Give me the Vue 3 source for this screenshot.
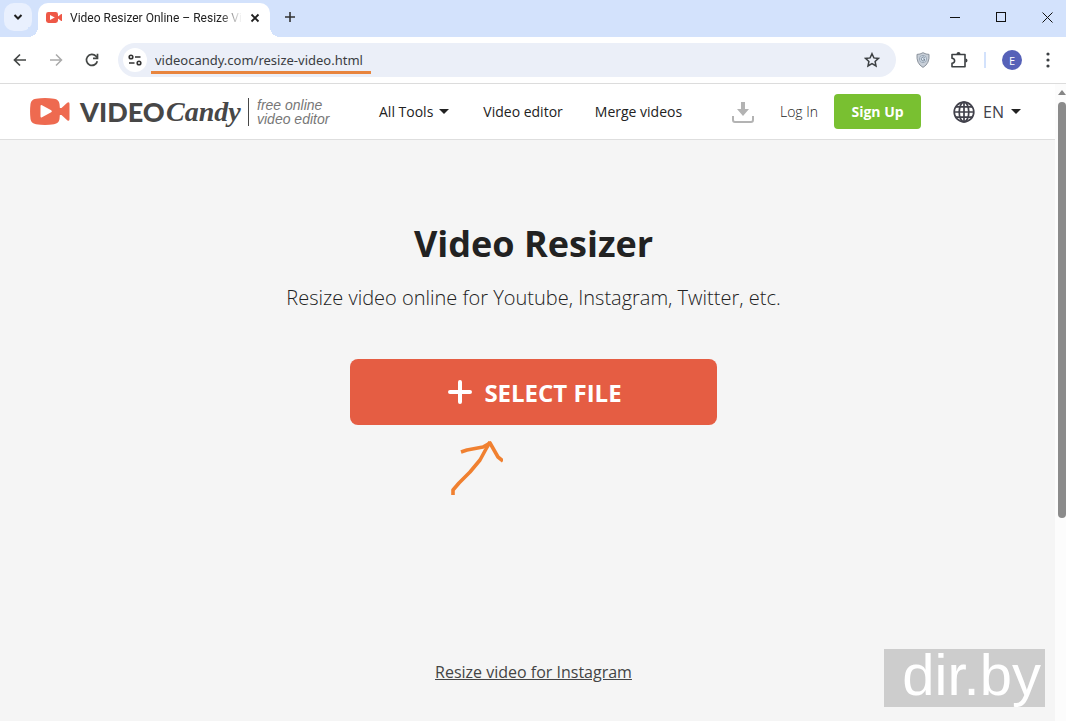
<template>
  <div class="window">
    <!-- Tab strip -->
    <div class="tab-strip">
      <button class="tab-search" aria-label="Search tabs">
        <svg width="10" height="8" viewBox="0 0 10 8"><path d="M1.5 2 5 5.5 8.500 2" fill="none" stroke="#1f1f1f" stroke-width="2" /></svg>
      </button>
      <div class="tab">
        <svg class="favicon" width="16" height="11" viewBox="0 0 40 27">
          <rect width="30" height="27" rx="6" fill="#ee5847" />
          <path d="M28 10.500h3L38 5q2-1 2 1v15q0 2-2 1l-7-5.500h-3z" fill="#ee5847" />
          <path d="M10 7.500v12l12-6z" fill="#fff" />
        </svg>
        <span class="tab-title">{{ tabTitle }}</span>
        <button class="tab-close" aria-label="Close tab">
          <svg width="10" height="10" viewBox="0 0 10 10"><path d="m1.500 1.500 7 7m0-7-7 7" stroke="#1f1f1f" stroke-width="1.800" /></svg>
        </button>
      </div>
      <button class="new-tab" aria-label="New tab">
        <svg width="12" height="12" viewBox="0 0 12 12"><path d="M6 1v10M1 6h10" stroke="#333" stroke-width="1.600" /></svg>
      </button>
      <div class="window-controls">
        <button aria-label="Minimize"><svg width="11" height="11"><path d="M0 5.500h10" stroke="#111" /></svg></button>
        <button aria-label="Maximize"><svg width="11" height="11"><rect x=".5" y=".5" width="9" height="9" fill="none" stroke="#111" /></svg></button>
        <button aria-label="Close"><svg width="11" height="11"><path d="m.5.5 10 10m0-10-10 10" stroke="#111" /></svg></button>
      </div>
    </div>

    <!-- Toolbar -->
    <div class="toolbar">
      <div class="history">
        <button aria-label="Back">
          <svg width="14" height="14" viewBox="0 0 14 14"><path d="M13 7H1.500M7 1.500 1.500 7 7 12.500" fill="none" stroke="#444746" stroke-width="1.700" /></svg>
        </button>
        <button aria-label="Forward" disabled>
          <svg width="14" height="14" viewBox="0 0 14 14"><path d="M1 7h11.500M7 1.500 12.500 7 7 12.500" fill="none" stroke="#aaa" stroke-width="1.500" /></svg>
        </button>
        <button aria-label="Reload">
          <svg width="14" height="14" viewBox="0 0 14 14">
            <path d="M12.300 8.200A5.500 5.500 0 1 1 11 3.200l1.500 1.500" fill="none" stroke="#444746" stroke-width="1.700" />
            <path d="M12.500.8v4.600H8" fill="none" stroke="#444746" stroke-width="1.700" />
          </svg>
        </button>
      </div>
      <div class="omnibox">
        <button class="site-info" aria-label="View site information">
          <svg width="14" height="12" viewBox="0 0 14 12" fill="none" stroke="#333" stroke-width="1.600">
            <circle cx="3" cy="3" r="1.800" /><path d="M7 3h5.500M1 9h5.500" /><circle cx="11" cy="9" r="1.800" />
          </svg>
        </button>
        <label class="address">
          <input v-model="address" type="text" aria-label="Address" spellcheck="false" />
        </label>
        <button class="bookmark" aria-label="Bookmark this tab">
          <svg width="16" height="16" viewBox="0 0 16 16"><path d="m8 1.700 1.900 4.200 4.600.5-3.400 3.100.9 4.500L8 11.700 4 14l.9-4.500L1.500 6.400l4.600-.5z" fill="none" stroke="#3c4043" stroke-width="1.500" /></svg>
        </button>
      </div>
      <div class="extensions">
        <button aria-label="Tracking protection">
          <svg width="14" height="16" viewBox="0 0 14 16">
            <path d="M7 .7q3 1.800 6 1.700.8 9.200-6 13Q.200 11.600 1 2.400 4 2.500 7 .7z" fill="#c9d0d9" stroke="#89919b" />
            <circle cx="7" cy="7" r="3.600" fill="#dce7f2" stroke="#8c99a8" stroke-width=".8" />
            <path d="M8.700 5.700a2 2 0 1 0-.2 2.800V7H7" fill="none" stroke="#7a8796" />
          </svg>
        </button>
        <button aria-label="Extensions">
          <svg width="18" height="18" viewBox="0 0 18 18">
            <path d="M2 3.500h13v12.300H2v-3.600q2.600-.3 2.600-2.500T2 7.200z" fill="none" stroke="#3c4043" stroke-width="1.600" stroke-linejoin="round" />
            <path d="M6.500 3a2 2 0 0 1 4 0zM15.500 7.500a2 2 0 0 1 0 4z" fill="#3c4043" />
          </svg>
        </button>
      </div>
      <span class="separator"></span>
      <button class="profile" aria-label="Profile">E</button>
      <button class="menu" aria-label="Menu">
        <svg width="4" height="16" viewBox="0 0 4 16" fill="#3c4043"><circle cx="2" cy="2" r="1.600" /><circle cx="2" cy="8" r="1.600" /><circle cx="2" cy="14" r="1.600" /></svg>
      </button>
    </div>

    <div class="viewport">
      <div class="page">
        <!-- Site header -->
        <header class="site-header">
          <a href="#" class="logo">
            <svg width="40" height="27" viewBox="0 0 40 27">
              <path d="M6 .8Q15-.6 24 .8q5 .7 5.500 5.200.9 7.500 0 15-.5 4.500-5.500 5.200-9 1.400-18 0-5-.7-5.500-5.200-.9-7.500 0-15Q1 1.500 6 .8z" fill="#ee6a50" />
              <path d="m31.500 10 5.700-5.200Q39.500 3.200 39.500 6v15q0 2.800-2.300 1.200L31.500 17z" fill="#ee6a50" />
              <path d="M28 10h4v7h-4z" fill="#ee6a50" />
              <path d="M10.500 8.300q0-1.700 1.500-1l9.200 5q1.500 1 0 2l-9.200 5q-1.500.7-1.500-1z" fill="#fff" />
            </svg>
            <span class="logo-video">VIDEO</span>
            <span class="logo-candy">Candy</span>
            <span class="tagline">free online<br />video editor</span>
          </a>
          <nav class="main-nav">
            <a href="#">All Tools <span class="caret"></span></a>
            <a href="#">Video editor</a>
            <a href="#">Merge videos</a>
          </nav>
          <div class="account">
            <a href="#" class="downloads" aria-label="Downloads">
              <svg width="22" height="22" viewBox="0 0 22 22">
                <path d="M9 1h4v7h4l-6 7-6-7h4z" fill="#b3b3b3" />
                <path d="M1 15v4q0 2 2 2h16q2 0 2-2v-4" fill="none" stroke="#b3b3b3" stroke-width="2" />
              </svg>
            </a>
            <a href="#" class="login">Log In</a>
            <button class="signup">Sign Up</button>
          </div>
          <button class="language">
            <svg width="22" height="22" viewBox="0 0 22 22" fill="none" stroke="#41414b" stroke-width="1.700">
              <circle cx="11" cy="11" r="9.800" />
              <ellipse cx="11" cy="11" rx="4.800" ry="9.800" />
              <path d="M11 1v20M1 11h20M3 5.800h16M3 16.200h16" />
            </svg>
            EN
            <span class="caret"></span>
          </button>
        </header>

        <!-- Upload area -->
        <main class="content">
          <h1>Video Resizer</h1>
          <p class="subtitle">Resize video online for Youtube, Instagram, Twitter, etc.</p>
          <div class="upload">
            <button class="select-file">
              <svg width="24" height="24" viewBox="0 0 24 24"><path d="M12 2v20M2 12h20" stroke="#fff" stroke-width="4" stroke-linecap="round" /></svg>
              SELECT FILE
            </button>
            <svg class="arrow" width="54" height="56" viewBox="0 0 54 56" fill="none" stroke="#f08030" stroke-width="3.600" stroke-linejoin="round">
              <path d="M4 55v-5l6-7 11-11 10-12 6-11 4-7" />
              <path d="m12 12 6-2 16-3 7-4 4 7 4 7 5 4" />
            </svg>
          </div>
          <a href="#" class="more-link">Resize video for Instagram</a>
        </main>
      </div>
      <div class="scrollbar">
        <span class="scroll-up"></span>
        <span class="scroll-thumb"></span>
      </div>
      <div class="watermark">dir.by</div>
    </div>
  </div>
</template>

<script setup>
import { ref } from 'vue';

const tabTitle = 'Video Resizer Online – Resize Vi';
const address = ref('videocandy.com/resize-video.html');
</script>

<style>
body {
  margin: 0;
}
</style>

<style scoped>
* {
  box-sizing: border-box;
}

.window {
  height: 100vh;
  display: flex;
  flex-direction: column;
  overflow: hidden;
  background: #fff;
  font-family: "Open Sans", "Noto Sans", sans-serif;
  color: #222;
}

button {
  border: none;
  padding: 0;
  background: none;
  font-family: inherit;
  color: inherit;
  display: flex;
  align-items: center;
  justify-content: center;
  cursor: pointer;
}

a {
  color: inherit;
  text-decoration: none;
}

svg {
  flex: none;
  display: block;
}

/* Tab strip */
.tab-strip {
  flex: none;
  height: 37px;
  display: flex;
  padding: 3px 0 0 4px;
  background: #d3e2fc;
}

.tab-search {
  width: 28px;
  height: 28px;
  border-radius: 10px;
  background: #e9f0fe;
}

.tab {
  position: relative;
  width: 232px;
  height: 34px;
  margin-left: 6px;
  padding: 0 11px 5px 8px;
  display: flex;
  align-items: center;
  background: #fff;
  border-radius: 10px 10px 0 0;
}

.tab::before,
.tab::after {
  content: "";
  position: absolute;
  bottom: 0;
  width: 10px;
  height: 10px;
}

.tab::before {
  left: -10px;
  background: radial-gradient(circle at 0 0, #d3e2fc 10px, #fff 10px);
}

.tab::after {
  right: -10px;
  background: radial-gradient(circle at 100% 0, #d3e2fc 10px, #fff 10px);
}

.tab-title {
  flex: 1;
  margin: 0 8px;
  white-space: nowrap;
  font-family: Roboto, sans-serif;
  font-size: 12px;
  line-height: 18px;
  -webkit-mask-image: linear-gradient(90deg, #000 150px, transparent 172px);
  mask-image: linear-gradient(90deg, #000 150px, transparent 172px);
}

.tab-close {
  width: 12px;
  height: 16px;
}

.new-tab {
  width: 28px;
  height: 28px;
  margin-left: 6px;
}

.window-controls {
  margin-left: auto;
  display: flex;
}

.window-controls button {
  width: 46px;
  height: 28px;
}

.window-controls button:last-child {
  width: 38px;
  margin-left: 4px;
}

/* Toolbar */
.toolbar {
  flex: none;
  height: 47px;
  padding: 0 16px 0 12px;
  display: flex;
  align-items: center;
  border-bottom: 1px solid #dcdcdc;
}

.history {
  display: flex;
  gap: 20px;
  margin-right: 18px;
}

.history button {
  width: 16px;
  height: 24px;
}

.omnibox {
  flex: 1;
  height: 34px;
  padding: 0 15px 0 5px;
  display: flex;
  align-items: center;
  border-radius: 17px;
  background: #ebeff8;
}

.site-info {
  width: 24px;
  height: 24px;
  border-radius: 12px;
  background: #fff;
}

.address {
  width: 220px;
  height: 28px;
  margin-left: 4px;
  padding: 0 0 0 4px;
  border-bottom: 3px solid #e8853e;
}

.address input {
  display: block;
  width: 100%;
  height: 25px;
  border: none;
  padding: 2px 0 0;
  outline: none;
  background: none;
  font-family: "Noto Sans", sans-serif;
  font-size: 13px;
  color: #3a3d42;
}

.bookmark {
  width: 18px;
  height: 24px;
  margin-left: auto;
}

.extensions {
  display: flex;
  gap: 18px;
  margin-left: 18px;
}

.extensions button {
  width: 18px;
  height: 24px;
}

.separator {
  width: 2px;
  height: 16px;
  margin-left: 16px;
  background: #d3e2fc;
}

.profile {
  width: 20px;
  height: 20px;
  margin-left: 16px;
  border-radius: 50%;
  background: #5661b8;
  color: #fff;
  font-size: 11px;
}

.menu {
  width: 4px;
  height: 24px;
  margin-left: 24px;
}

/* Page */
.viewport {
  position: relative;
  flex: 1;
  min-height: 0;
  display: flex;
}

.page {
  flex: 1;
  display: flex;
  flex-direction: column;
}

.site-header {
  flex: none;
  height: 56px;
  padding: 0 32px 0 30px;
  display: flex;
  align-items: center;
  border-bottom: 1px solid #dedede;
  white-space: nowrap;
}

.logo {
  width: 318px;
  display: flex;
  align-items: center;
  color: #474747;
}

.logo-video {
  width: 86px;
  margin-left: 10px;
  font-family: Lato, sans-serif;
  font-weight: 900;
  font-size: 27px;
  line-height: 32px;
}

.logo-candy {
  width: 82px;
  font-family: "Liberation Serif", serif;
  font-style: italic;
  font-weight: 700;
  font-size: 28px;
  line-height: 32px;
}

.tagline {
  padding-left: 8px;
  border-left: 1px solid #474747;
  font-family: "Liberation Sans", sans-serif;
  font-style: italic;
  font-size: 14px;
  line-height: 14px;
  color: #777;
}

.main-nav {
  display: flex;
  gap: 32px;
  margin-left: 31px;
  font-size: 14px;
}

.main-nav a {
  display: flex;
  align-items: center;
}

.caret {
  margin: 0 2px 0 6px;
  border: 5px solid transparent;
  border-top-color: #222;
  border-bottom: none;
}

.account {
  display: flex;
  align-items: center;
  margin-left: auto;
  font-size: 14px;
}

.login {
  margin: 0 16px 0 26px;
  font-weight: 300;
}

.signup {
  width: 87px;
  height: 35px;
  border-radius: 4px;
  background: #79c031;
  color: #fff;
  font-size: 14px;
  font-weight: 700;
}

.language {
  margin-left: 32px;
  gap: 7px;
  font-size: 16px;
  color: #41414b;
}

.language svg {
  margin-right: 1px;
}

.language .caret {
  margin-left: 0;
}

.content {
  flex: 1;
  display: flex;
  flex-direction: column;
  align-items: center;
  padding: 80px 0 0 12px;
  background: #f5f5f5;
}

h1 {
  margin: 0;
  font-size: 36px;
  line-height: 48px;
  font-weight: 700;
}

.subtitle {
  margin: 16px 0 47px;
  font-size: 20px;
  line-height: 28px;
  font-weight: 300;
}

.upload {
  position: relative;
}

.select-file {
  width: 367px;
  height: 66px;
  padding-left: 3px;
  gap: 12px;
  border-radius: 8px;
  background: #e55d43;
  color: #fff;
  font-size: 24px;
  font-weight: 700;
}

.arrow {
  position: absolute;
  left: 99px;
  top: 81px;
}

.more-link {
  margin-top: 235px;
  font-size: 16px;
  line-height: 24px;
  color: #444;
  text-decoration: underline;
}

/* Scrollbar */
.scrollbar {
  flex: none;
  width: 11px;
  display: flex;
  flex-direction: column;
  align-items: flex-end;
  padding-top: 6px;
  background: #fcfcfc;
}

.scroll-up {
  border: 4px solid transparent;
  border-bottom: 5px solid #858585;
  border-top: none;
}

.scroll-thumb {
  width: 8px;
  height: 66%;
  margin-top: 7px;
  border-radius: 4px;
  background: #8b8b8b;
}

.watermark {
  position: absolute;
  right: 21px;
  bottom: 14px;
  width: 161px;
  height: 58px;
  padding-right: 4px;
  background: #cdcdcd;
  color: #fff;
  font-family: "Liberation Sans", sans-serif;
  font-size: 58px;
  line-height: 52px;
  text-align: right;
}
</style>
